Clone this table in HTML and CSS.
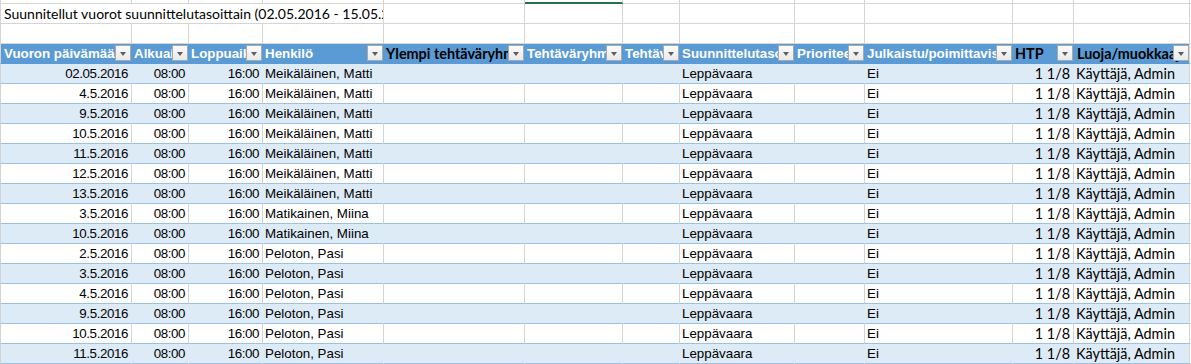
FILE: index.html
```html
<!DOCTYPE html>
<html lang="fi">
<head>
<meta charset="utf-8">
<title>Suunnitellut vuorot</title>
<link rel="stylesheet" href="styles.css">
</head>
<body>
<div class="sheet">
  <div class="row top">
    <div class="c"></div><div class="c"></div><div class="c"></div><div class="c"></div><div class="c"></div><div class="c sel"></div><div class="c"></div><div class="c"></div><div class="c"></div><div class="c"></div><div class="c"></div><div class="c"></div><div class="c x"></div>
  </div>
  <div class="row">
    <div class="c title">Suunnitellut vuorot suunnittelutasoittain (02.05.2016 - 15.05.2016)</div><div class="c"></div><div class="c"></div><div class="c"></div><div class="c"></div><div class="c"></div><div class="c"></div><div class="c"></div><div class="c"></div><div class="c x"></div>
  </div>
  <div class="row">
    <div class="c"></div><div class="c"></div><div class="c"></div><div class="c"></div><div class="c"></div><div class="c"></div><div class="c"></div><div class="c"></div><div class="c"></div><div class="c"></div><div class="c"></div><div class="c"></div><div class="c x"></div>
  </div>
  <div class="row head">
    <div class="c">Vuoron päivämäärä<span class="dd"></span></div>
    <div class="c">Alkuaika<span class="dd"></span></div>
    <div class="c">Loppuaika<span class="dd"></span></div>
    <div class="c">Henkilö<span class="dd"></span></div>
    <div class="c dark">Ylempi tehtäväryhmä<span class="dd"></span></div>
    <div class="c">Tehtäväryhmä<span class="dd"></span></div>
    <div class="c">Tehtävä<span class="dd"></span></div>
    <div class="c">Suunnittelutaso<span class="dd"></span></div>
    <div class="c">Prioriteetti<span class="dd"></span></div>
    <div class="c">Julkaistu/poimittavissa<span class="dd"></span></div>
    <div class="c dark">HTP<span class="dd"></span></div>
    <div class="c dark">Luoja/muokkaaja<span class="dd"></span></div>
    <div class="c x"></div>
  </div>

  <div class="row data band"><div class="c r">02.05.2016</div><div class="c r">08:00</div><div class="c r">16:00</div><div class="c">Meikäläinen, Matti</div><div class="c"></div><div class="c"></div><div class="c"></div><div class="c">Leppävaara</div><div class="c"></div><div class="c">Ei</div><div class="c r cal">1 1/8</div><div class="c cal">Käyttäjä, Admin</div><div class="c x"></div></div>
  <div class="row data"><div class="c r">4.5.2016</div><div class="c r">08:00</div><div class="c r">16:00</div><div class="c">Meikäläinen, Matti</div><div class="c"></div><div class="c"></div><div class="c"></div><div class="c">Leppävaara</div><div class="c"></div><div class="c">Ei</div><div class="c r cal">1 1/8</div><div class="c cal">Käyttäjä, Admin</div><div class="c x"></div></div>
  <div class="row data band"><div class="c r">9.5.2016</div><div class="c r">08:00</div><div class="c r">16:00</div><div class="c">Meikäläinen, Matti</div><div class="c"></div><div class="c"></div><div class="c"></div><div class="c">Leppävaara</div><div class="c"></div><div class="c">Ei</div><div class="c r cal">1 1/8</div><div class="c cal">Käyttäjä, Admin</div><div class="c x"></div></div>
  <div class="row data"><div class="c r">10.5.2016</div><div class="c r">08:00</div><div class="c r">16:00</div><div class="c">Meikäläinen, Matti</div><div class="c"></div><div class="c"></div><div class="c"></div><div class="c">Leppävaara</div><div class="c"></div><div class="c">Ei</div><div class="c r cal">1 1/8</div><div class="c cal">Käyttäjä, Admin</div><div class="c x"></div></div>
  <div class="row data band"><div class="c r">11.5.2016</div><div class="c r">08:00</div><div class="c r">16:00</div><div class="c">Meikäläinen, Matti</div><div class="c"></div><div class="c"></div><div class="c"></div><div class="c">Leppävaara</div><div class="c"></div><div class="c">Ei</div><div class="c r cal">1 1/8</div><div class="c cal">Käyttäjä, Admin</div><div class="c x"></div></div>
  <div class="row data"><div class="c r">12.5.2016</div><div class="c r">08:00</div><div class="c r">16:00</div><div class="c">Meikäläinen, Matti</div><div class="c"></div><div class="c"></div><div class="c"></div><div class="c">Leppävaara</div><div class="c"></div><div class="c">Ei</div><div class="c r cal">1 1/8</div><div class="c cal">Käyttäjä, Admin</div><div class="c x"></div></div>
  <div class="row data band"><div class="c r">13.5.2016</div><div class="c r">08:00</div><div class="c r">16:00</div><div class="c">Meikäläinen, Matti</div><div class="c"></div><div class="c"></div><div class="c"></div><div class="c">Leppävaara</div><div class="c"></div><div class="c">Ei</div><div class="c r cal">1 1/8</div><div class="c cal">Käyttäjä, Admin</div><div class="c x"></div></div>
  <div class="row data"><div class="c r">3.5.2016</div><div class="c r">08:00</div><div class="c r">16:00</div><div class="c">Matikainen, Miina</div><div class="c"></div><div class="c"></div><div class="c"></div><div class="c">Leppävaara</div><div class="c"></div><div class="c">Ei</div><div class="c r cal">1 1/8</div><div class="c cal">Käyttäjä, Admin</div><div class="c x"></div></div>
  <div class="row data band"><div class="c r">10.5.2016</div><div class="c r">08:00</div><div class="c r">16:00</div><div class="c">Matikainen, Miina</div><div class="c"></div><div class="c"></div><div class="c"></div><div class="c">Leppävaara</div><div class="c"></div><div class="c">Ei</div><div class="c r cal">1 1/8</div><div class="c cal">Käyttäjä, Admin</div><div class="c x"></div></div>
  <div class="row data"><div class="c r">2.5.2016</div><div class="c r">08:00</div><div class="c r">16:00</div><div class="c">Peloton, Pasi</div><div class="c"></div><div class="c"></div><div class="c"></div><div class="c">Leppävaara</div><div class="c"></div><div class="c">Ei</div><div class="c r cal">1 1/8</div><div class="c cal">Käyttäjä, Admin</div><div class="c x"></div></div>
  <div class="row data band"><div class="c r">3.5.2016</div><div class="c r">08:00</div><div class="c r">16:00</div><div class="c">Peloton, Pasi</div><div class="c"></div><div class="c"></div><div class="c"></div><div class="c">Leppävaara</div><div class="c"></div><div class="c">Ei</div><div class="c r cal">1 1/8</div><div class="c cal">Käyttäjä, Admin</div><div class="c x"></div></div>
  <div class="row data"><div class="c r">4.5.2016</div><div class="c r">08:00</div><div class="c r">16:00</div><div class="c">Peloton, Pasi</div><div class="c"></div><div class="c"></div><div class="c"></div><div class="c">Leppävaara</div><div class="c"></div><div class="c">Ei</div><div class="c r cal">1 1/8</div><div class="c cal">Käyttäjä, Admin</div><div class="c x"></div></div>
  <div class="row data band"><div class="c r">9.5.2016</div><div class="c r">08:00</div><div class="c r">16:00</div><div class="c">Peloton, Pasi</div><div class="c"></div><div class="c"></div><div class="c"></div><div class="c">Leppävaara</div><div class="c"></div><div class="c">Ei</div><div class="c r cal">1 1/8</div><div class="c cal">Käyttäjä, Admin</div><div class="c x"></div></div>
  <div class="row data"><div class="c r">10.5.2016</div><div class="c r">08:00</div><div class="c r">16:00</div><div class="c">Peloton, Pasi</div><div class="c"></div><div class="c"></div><div class="c"></div><div class="c">Leppävaara</div><div class="c"></div><div class="c">Ei</div><div class="c r cal">1 1/8</div><div class="c cal">Käyttäjä, Admin</div><div class="c x"></div></div>
  <div class="row data band"><div class="c r">11.5.2016</div><div class="c r">08:00</div><div class="c r">16:00</div><div class="c">Peloton, Pasi</div><div class="c"></div><div class="c"></div><div class="c"></div><div class="c">Leppävaara</div><div class="c"></div><div class="c">Ei</div><div class="c r cal">1 1/8</div><div class="c cal">Käyttäjä, Admin</div><div class="c x"></div></div>
</div>
</body>
</html>
```

FILE: styles.css
```css
html, body {
  margin: 0;
  padding: 0;
  background: #ffffff;
}
body {
  width: 1191px;
  height: 364px;
  overflow: hidden;
  font-family: "Liberation Sans", Arial, sans-serif;
  font-size: 13.33px;
  color: #000;
}
.sheet {
  display: flex;
  flex-direction: column;
}
.row {
  display: grid;
  grid-template-columns: 132px 57px 74px 121px 141px 98px 57px 115px 70px 148px 61px 116px 2px;
  height: 20px;
}
.row.top {
  height: 4px;
}
.c {
  box-sizing: border-box;
  border-right: 1px solid #d4d4d4;
  border-bottom: 1px solid #d4d4d4;
  overflow: hidden;
  white-space: nowrap;
  padding: 0 3px 0 2px;
  line-height: 19px;
  min-width: 0;
}
.c:first-child {
  border-left: 1px solid #d4d4d4;
}
.c.x {
  border-right: none;
  background: #fff;
}
.c.sel {
  border-bottom: 2px solid #217346;
  margin-top: -1px;
}
.title {
  grid-column: 1 / span 4;
  font-family: Lato, "Open Sans", sans-serif;
  font-size: 14px;
  padding-left: 3px;
  line-height: 20px;
}
.r {
  text-align: right;
  letter-spacing: -0.4px;
}
.cal {
  font-family: Lato, "Open Sans", sans-serif;
  font-size: 14.4px;
  letter-spacing: 0;
}

/* header row */
.head .c {
  position: relative;
  background: #5b9bd5;
  border-right-color: #5b9bd5;
  border-bottom-color: #5b9bd5;
  color: #ffffff;
  font-weight: bold;
  padding-left: 2px;
  padding-top: 1px;
  line-height: 18px;
}
.head .c:first-child {
  border-left-color: #d4d4d4;
  padding-left: 3px;
}
.head .c:nth-child(12) {
  border-right-color: #d4d4d4;
  padding-left: 3px;
}
.head .c.dark {
  color: #000000;
  font-family: Lato, "Open Sans", sans-serif;
  font-size: 14.4px;
}
.head .c.x {
  background: #fff;
  border-bottom-color: #d4d4d4;
}
.dd {
  position: absolute;
  right: 0;
  top: 1px;
  width: 16px;
  height: 16px;
  box-sizing: border-box;
  border: 1px solid #a9a9a9;
  background: linear-gradient(#fbfbfb, #e9e9e9);
}
.dd::after {
  content: "";
  position: absolute;
  left: 4px;
  top: 6px;
  border-left: 3.5px solid transparent;
  border-right: 3.5px solid transparent;
  border-top: 4px solid #5f5f5f;
}

/* data rows */
.data .c {
  border-bottom-color: #9bc2e6;
}
.data .c.x {
  border-bottom-color: #d4d4d4;
}
.band .c {
  background: #ddebf7;
  border-right-color: #ddebf7;
}
.band .c:first-child {
  border-left-color: #d4d4d4;
}
.data .c:nth-child(12) {
  border-right-color: #d4d4d4;
}
.band .c.x {
  background: #fff;
}
```
